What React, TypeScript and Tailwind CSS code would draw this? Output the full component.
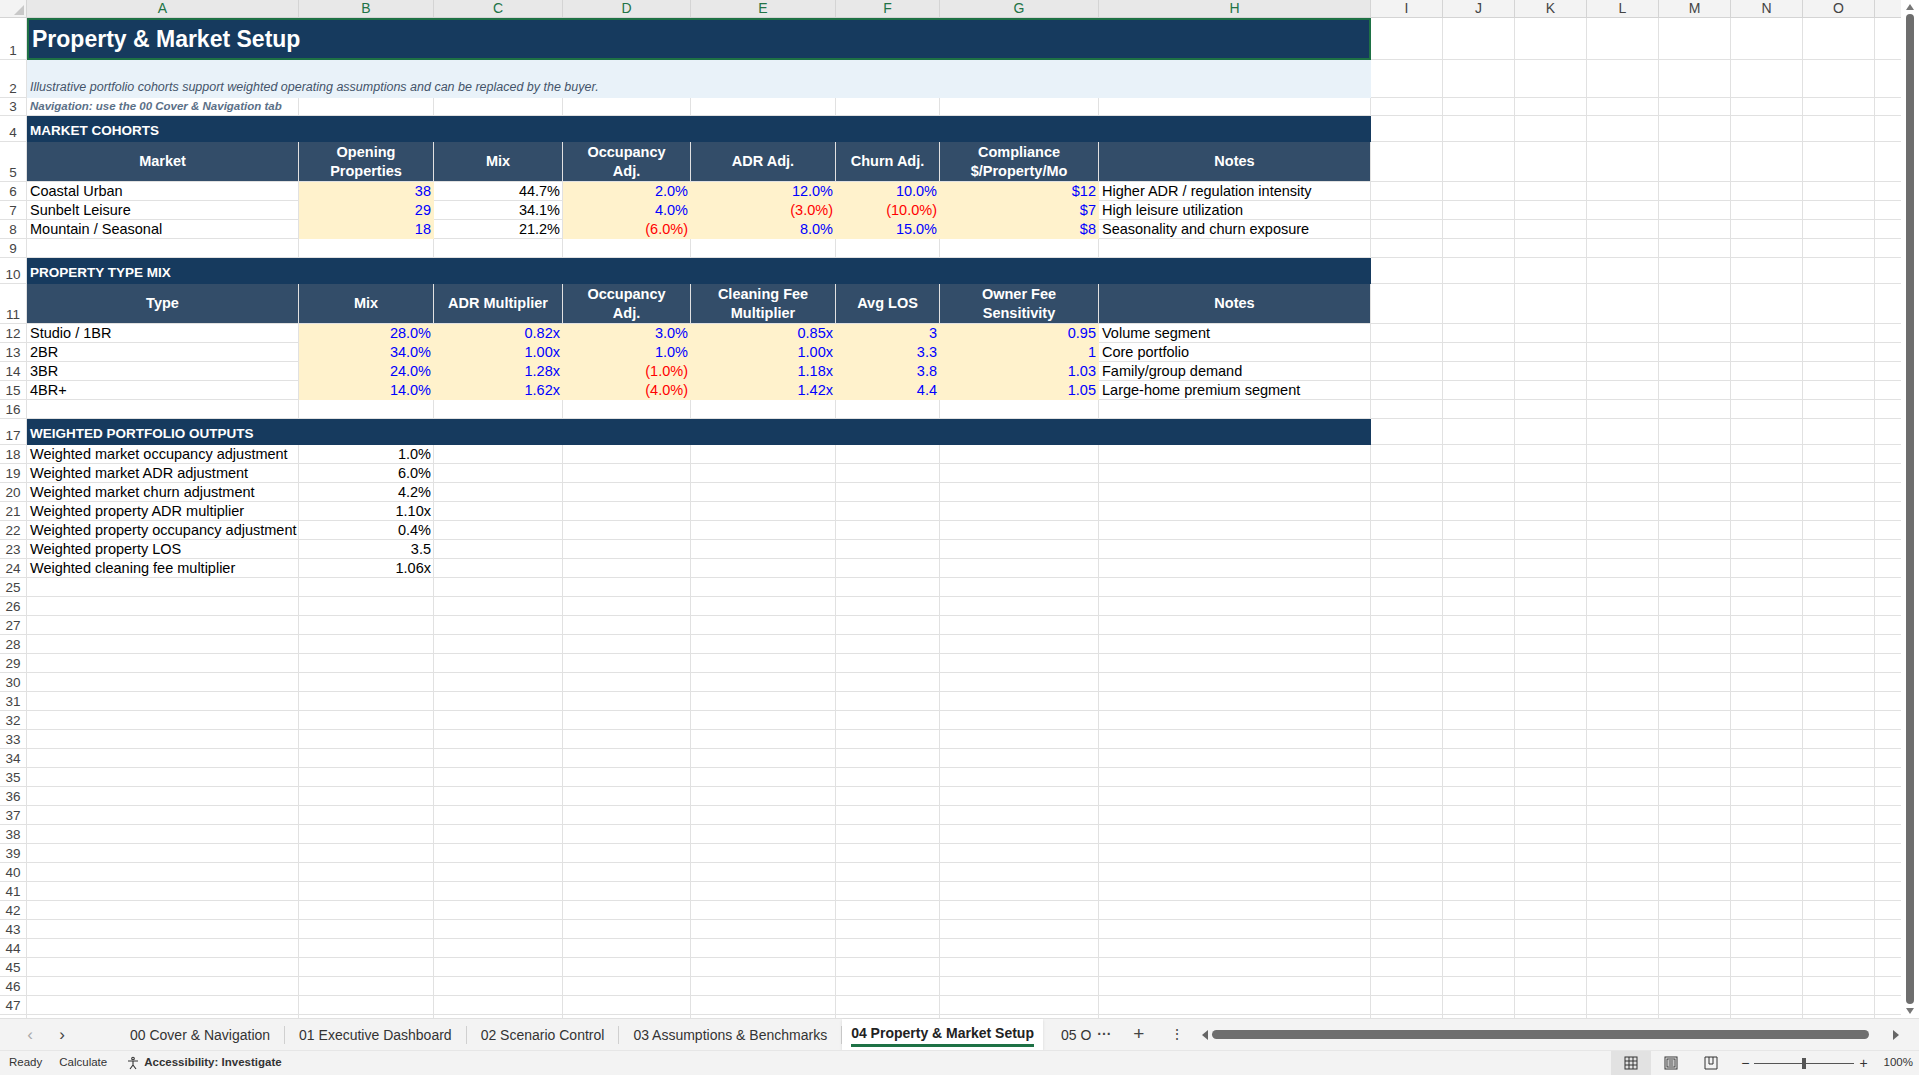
import React from "react";

const W = ["w-[272px]", "w-[135px]", "w-[129px]", "w-[128px]", "w-[145px]", "w-[104px]", "w-[159px]", "w-[272px]"];
const EXTRA = ["I", "J", "K", "L", "M", "N", "O", ""];
const LET = ["A", "B", "C", "D", "E", "F", "G", "H"];

type C = { t?: string; c?: string; w?: boolean };

const Y = "bg-[#fff2cc] border-[#fff2cc]";
const lab: string = "justify-start pl-[3px] text-black";
const bY = `${Y} justify-end pr-[2px] text-[#0000ff]`;
const rY = `${Y} justify-end pr-[2px] text-[#ff0000]`;
const kR = "justify-end pr-[2px] text-black";
const HD = "bg-[#334d69] border-[#334d69] text-white font-bold justify-center text-center leading-[19px] items-center px-[14px] text-[14.5px]";

function Extras() {
  return (
    <>
      {EXTRA.map((e, i) => (
        <div key={i} className="w-[72px] shrink-0 border-r border-b border-[#e1e1e1]" />
      ))}
    </>
  );
}

function Num({ n }: { n: number }) {
  return (
    <div className="w-[27px] shrink-0 border-r border-b border-[#e1e1e1] flex items-end justify-center text-[13.5px] text-[#444] leading-[17px]">
      {n}
    </div>
  );
}

function Row({ n, h, cells }: { n: number; h: string; cells: C[] }) {
  return (
    <div className={`flex ${h}`}>
      <Num n={n} />
      {LET.map((_, i) => {
        const cell = cells[i] || {};
        return (
          <div
            key={i}
            className={`${W[i]} shrink-0 border-r border-b border-[#e1e1e1] flex ${cell.w ? "whitespace-normal" : "items-end whitespace-nowrap leading-[17px]"} ${cell.c || ""}`}
          >
            {cell.t}
          </div>
        );
      })}
      <Extras />
    </div>
  );
}

function Merged({ n, h, cls, children }: { n: number; h: string; cls: string; children?: React.ReactNode }) {
  return (
    <div className={`flex ${h}`}>
      <Num n={n} />
      <div className={`w-[1344px] shrink-0 flex ${cls}`}>{children}</div>
      <Extras />
    </div>
  );
}

const market: string[][] = [
  ["Coastal Urban", "38", "44.7%", "2.0%", "12.0%", "10.0%", "$12", "Higher ADR / regulation intensity"],
  ["Sunbelt Leisure", "29", "34.1%", "4.0%", "(3.0%)", "(10.0%)", "$7", "High leisure utilization"],
  ["Mountain / Seasonal", "18", "21.2%", "(6.0%)", "8.0%", "15.0%", "$8", "Seasonality and churn exposure"],
];
const types: string[][] = [
  ["Studio / 1BR", "28.0%", "0.82x", "3.0%", "0.85x", "3", "0.95", "Volume segment"],
  ["2BR", "34.0%", "1.00x", "1.0%", "1.00x", "3.3", "1", "Core portfolio"],
  ["3BR", "24.0%", "1.28x", "(1.0%)", "1.18x", "3.8", "1.03", "Family/group demand"],
  ["4BR+", "14.0%", "1.62x", "(4.0%)", "1.42x", "4.4", "1.05", "Large-home premium segment"],
];
const outputs = [
  ["Weighted market occupancy adjustment", "1.0%"],
  ["Weighted market ADR adjustment", "6.0%"],
  ["Weighted market churn adjustment", "4.2%"],
  ["Weighted property ADR multiplier", "1.10x"],
  ["Weighted property occupancy adjustment", "0.4%"],
  ["Weighted property LOS", "3.5"],
  ["Weighted cleaning fee multiplier", "1.06x"],
];

const yc = (v: string) => (v.startsWith("(") ? rY : bY);

export default function App() {
  const blank = (n: number) => <Row key={n} n={n} h="h-[19px]" cells={[]} />;
  const rest: React.ReactNode[] = [];
  for (let n = 25; n <= 48; n++) rest.push(blank(n));

  return (
    <div className="w-[1919px] h-[1075px] overflow-hidden bg-white flex flex-col text-[14.5px]" style={{ fontFamily: '"Liberation Sans", Arial, sans-serif' }}>
      <div className="flex-1 flex overflow-hidden relative">
        <div className="flex-1 overflow-hidden">
          <div className="flex h-[18px] bg-[#f3f3f3]">
            <div className="w-[27px] shrink-0 border-r border-b border-[#d4d4d4] relative">
              <div className="absolute right-[2px] bottom-[2px] w-0 h-0 border-l-[10px] border-l-transparent border-b-[10px] border-b-[#c8c8c8]" />
            </div>
            {LET.map((l, i) => (
              <div key={l} className={`${W[i]} shrink-0 border-r border-b border-[#d4d4d4] text-center text-[14px] leading-[17px] text-[#217346] bg-[#e8e8e8]`}>{l}</div>
            ))}
            {EXTRA.map((l, i) => (
              <div key={i} className="w-[72px] shrink-0 border-r border-b border-[#d4d4d4] text-center text-[14px] leading-[17px] text-[#444]">{l}</div>
            ))}
          </div>
          <Merged n={1} h="h-[42px]" cls="bg-[#163a5e] border-2 border-[#1e7145] items-center pl-[3px]">
            <span className="text-white font-bold text-[23px]">Property &amp; Market Setup</span>
          </Merged>
          <Merged n={2} h="h-[38px]" cls="bg-[#e9f2f9] items-end pl-[3px] pb-[1px]">
            <span className="italic text-[12.5px] text-[#44546a]">Illustrative portfolio cohorts support weighted operating assumptions and can be replaced by the buyer.</span>
          </Merged>
          <Row n={3} h="h-[18px]" cells={[{ t: "Navigation: use the 00 Cover & Navigation tab", c: "pl-[3px] italic font-bold text-[11.5px] text-[#5b7087]" }]} />
          <Merged n={4} h="h-[26px]" cls="bg-[#163a5e] items-end pl-[3px] pb-[1px]">
            <span className="text-white font-bold text-[13.5px]">MARKET COHORTS</span>
          </Merged>
          <Row
            n={5}
            h="h-[40px]"
            cells={["Market", "Opening Properties", "Mix", "Occupancy Adj.", "ADR Adj.", "Churn Adj.", "Compliance $/Property/Mo", "Notes"].map((t) => ({ t, c: HD, w: true }))}
          />
          {market.map((r, i) => (
            <Row
              key={i}
              n={6 + i}
              h="h-[19px]"
              cells={[
                { t: r[0], c: lab },
                { t: r[1], c: bY },
                { t: r[2], c: kR },
                { t: r[3], c: yc(r[3]) },
                { t: r[4], c: yc(r[4]) },
                { t: r[5], c: yc(r[5]) },
                { t: r[6], c: bY },
                { t: r[7], c: lab },
              ]}
            />
          ))}
          {blank(9)}
          <Merged n={10} h="h-[26px]" cls="bg-[#163a5e] items-end pl-[3px] pb-[1px]">
            <span className="text-white font-bold text-[13.5px]">PROPERTY TYPE MIX</span>
          </Merged>
          <Row
            n={11}
            h="h-[40px]"
            cells={["Type", "Mix", "ADR Multiplier", "Occupancy Adj.", "Cleaning Fee Multiplier", "Avg LOS", "Owner Fee Sensitivity", "Notes"].map((t) => ({ t, c: HD, w: true }))}
          />
          {types.map((r, i) => (
            <Row
              key={i}
              n={12 + i}
              h="h-[19px]"
              cells={[
                { t: r[0], c: lab },
                ...r.slice(1, 7).map((v) => ({ t: v, c: yc(v) })),
                { t: r[7], c: lab },
              ]}
            />
          ))}
          {blank(16)}
          <Merged n={17} h="h-[26px]" cls="bg-[#163a5e] items-end pl-[3px] pb-[1px]">
            <span className="text-white font-bold text-[13.5px]">WEIGHTED PORTFOLIO OUTPUTS</span>
          </Merged>
          {outputs.map((r, i) => (
            <Row key={i} n={18 + i} h="h-[19px]" cells={[{ t: r[0], c: lab }, { t: r[1], c: kR }]} />
          ))}
          {rest}
        </div>
        <div className="w-[18px] shrink-0 bg-white flex flex-col items-center pt-[4px] pb-[4px]">
          <div className="w-0 h-0 border-l-[4px] border-r-[4px] border-b-[6px] border-l-transparent border-r-transparent border-b-[#777]" />
          <div className="w-[8px] flex-1 my-[4px] rounded bg-[#6e6e6e]" />
          <div className="w-0 h-0 border-l-[4px] border-r-[4px] border-t-[6px] border-l-transparent border-r-transparent border-t-[#777]" />
        </div>
      </div>
      <div className="h-[32px] shrink-0 bg-[#f3f3f3] border-t border-[#e0e0e0] flex items-center text-[14px] text-[#333]">
        <span className="ml-[20px] w-[20px] text-center text-[#aaa] text-[17px]">‹</span>
        <span className="ml-[12px] w-[20px] text-center text-[#444] text-[17px]">›</span>
        <div className="flex items-center h-full ml-[44px]">
          {["00 Cover & Navigation", "01 Executive Dashboard", "02 Scenario Control", "03 Assumptions & Benchmarks"].map((t) => (
            <div key={t} className="px-[14px] border-r border-[#d0d0d0] leading-[18px]">{t}</div>
          ))}
          <div className="h-full bg-white px-[9px] flex flex-col justify-center shadow-sm">
            <span className="font-semibold text-[#222] leading-[20px]">04 Property &amp; Market Setup</span>
            <div className="h-[3px] bg-[#1e7145] mt-[1px]" />
          </div>
          <div className="pl-[18px] leading-[18px]">05 O</div>
          <span className="font-bold text-[#444] ml-[6px]">···</span>
          <span className="ml-[22px] text-[19px] text-[#444]">+</span>
          <span className="ml-[26px] text-[#444]">⋮</span>
        </div>
        <div className="ml-[18px] flex-1 flex items-center pr-[20px]">
          <div className="w-0 h-0 border-t-[5px] border-b-[5px] border-r-[6px] border-t-transparent border-b-transparent border-r-[#666]" />
          <div className="flex-1 mx-[4px] h-[9px] rounded-full bg-[#6e6e6e]" />
          <div className="ml-[20px] w-0 h-0 border-t-[5px] border-b-[5px] border-l-[6px] border-t-transparent border-b-transparent border-l-[#666]" />
        </div>
      </div>
      <div className="h-[25px] shrink-0 bg-[#f3f3f3] border-t border-[#e6e6e6] flex items-center text-[11.5px] text-[#333]">
        <span className="ml-[9px]">Ready</span>
        <span className="ml-[17px]">Calculate</span>
        <span className="ml-[19px] font-semibold flex items-center gap-[4px]">
          <svg width="14" height="14" viewBox="0 0 14 14" fill="none" stroke="#333" strokeWidth="1.1"><circle cx="7" cy="2.5" r="1.3" /><path d="M2 5h10M7 5v4M7 9l-3 4M7 9l3 4" /></svg>
          Accessibility: Investigate
        </span>
        <div className="flex-1" />
        <div className="h-full w-[40px] bg-[#e2e2e2] flex items-center justify-center">
          <svg width="14" height="14" viewBox="0 0 14 14" fill="none" stroke="#333" strokeWidth="1"><rect x="1" y="1" width="12" height="12" /><path d="M5 1v12M9 1v12M1 5h12M1 9h12" /></svg>
        </div>
        <div className="w-[40px] flex items-center justify-center">
          <svg width="14" height="14" viewBox="0 0 14 14" fill="none" stroke="#333" strokeWidth="1"><rect x="1" y="1" width="12" height="12" /><rect x="3" y="3" width="8" height="8" /><path d="M4.5 5h5M4.5 7h5M4.5 9h5" /></svg>
        </div>
        <div className="w-[40px] flex items-center justify-center">
          <svg width="14" height="14" viewBox="0 0 14 14" fill="none" stroke="#333" strokeWidth="1"><path d="M1 1h12v12H1zM5 1v7h4V1" /></svg>
        </div>
        <span className="ml-[10px] text-[14px]">−</span>
        <div className="relative w-[100px] h-[1px] bg-[#555] mx-[5px]">
          <div className="absolute left-[48px] -top-[5px] w-[4px] h-[11px] bg-[#555]" />
        </div>
        <span className="text-[14px]">+</span>
        <span className="ml-[16px] mr-[6px]">100%</span>
      </div>
    </div>
  );
}
